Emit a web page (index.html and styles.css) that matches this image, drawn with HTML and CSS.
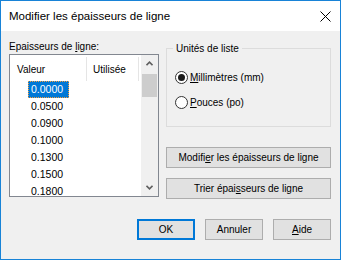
FILE: index.html
```html
<!DOCTYPE html>
<html lang="fr">
<head>
    <meta charset="UTF-8">
    <title>Modifier les épaisseurs de ligne</title>
    <link rel="stylesheet" href="styles.css">
</head>
<body>
    <div class="window">
        <div class="titlebar">
            <span class="title">Modifier les épaisseurs de ligne</span>
            <svg class="close" width="11" height="11" viewBox="0 0 11 11">
                <path d="M0.5 0.5 L10.5 10.5 M10.5 0.5 L0.5 10.5" stroke="#000" stroke-width="1" fill="none"/>
            </svg>
        </div>
        <div class="main">
            <div class="left">
                <div class="list-label">Epaisseurs de <u>l</u>igne:</div>
                <div class="listbox">
                    <div class="list-main">
                        <div class="list-head">
                            <span class="col col-val">Valeur</span>
                            <span class="col col-used">Utilisée</span>
                        </div>
                        <ul class="items">
                            <li><span class="val selected">0.0000</span></li>
                            <li><span class="val">0.0500</span></li>
                            <li><span class="val">0.0900</span></li>
                            <li><span class="val">0.1000</span></li>
                            <li><span class="val">0.1300</span></li>
                            <li><span class="val">0.1500</span></li>
                            <li><span class="val">0.1800</span></li>
                        </ul>
                    </div>
                    <div class="scrollbar">
                        <div class="arrow">
                            <svg width="7" height="5" viewBox="0 0 7 5"><polyline points="0.5,4.2 3.5,1.2 6.5,4.2" fill="none" stroke="#606060" stroke-width="1.6"/></svg>
                        </div>
                        <div class="thumb"></div>
                        <div class="track"></div>
                        <div class="arrow">
                            <svg width="7" height="5" viewBox="0 0 7 5"><polyline points="0.5,0.8 3.5,3.8 6.5,0.8" fill="none" stroke="#606060" stroke-width="1.6"/></svg>
                        </div>
                    </div>
                </div>
            </div>
            <div class="right">
                <fieldset class="units">
                    <legend>Unités de liste</legend>
                    <div class="radio-row">
                        <span class="radio"><span class="dot"></span></span>
                        <span><u>M</u>illimètres (mm)</span>
                    </div>
                    <div class="radio-row second">
                        <span class="radio"></span>
                        <span><u>P</u>ouces (po)</span>
                    </div>
                </fieldset>
                <button class="btn btn-wide first">Modifi<u>e</u>r les épaisseurs de ligne</button>
                <button class="btn btn-wide">Trier épai<u>s</u>seurs de ligne</button>
            </div>
        </div>
        <div class="footer">
            <button class="btn btn-small default">OK</button>
            <button class="btn btn-small">Annuler</button>
            <button class="btn btn-small"><u>A</u>ide</button>
        </div>
    </div>
</body>
</html>
```

FILE: styles.css
```css
body {
    margin: 0;
    font-family: "Liberation Sans", Arial, sans-serif;
    font-size: 10px;
    color: #000;
}
.window {
    width: 341px;
    height: 260px;
    box-sizing: border-box;
    border: 1px solid #1883d7;
    background: #f0f0f0;
    display: flex;
    flex-direction: column;
}
.titlebar {
    height: 30px;
    flex-shrink: 0;
    background: #fff;
    display: flex;
    align-items: center;
    justify-content: space-between;
    padding: 0 9px 0 8px;
}
.title {
    font-size: 11.5px;
}
.close {
    display: block;
}
.main {
    display: flex;
    gap: 7px;
    padding: 0 9px 0 8px;
}
.left {
    width: 150px;
}
.list-label {
    margin-top: 9px;
    margin-bottom: 1px;
    line-height: 13px;
}
.listbox {
    height: 143px;
    box-sizing: border-box;
    border: 1px solid #828790;
    background: #fff;
    display: flex;
    overflow: hidden;
}
.list-main {
    flex: 1;
    overflow: hidden;
}
.list-head {
    display: flex;
    height: 26px;
}
.col {
    margin-top: 2px;
    height: 24px;
    box-sizing: border-box;
    border-right: 1px solid #e5e5e5;
    display: flex;
    align-items: center;
}
.col-val {
    width: 77px;
    padding-left: 7px;
}
.col-used {
    width: 52px;
    padding-left: 6px;
}
.items {
    list-style: none;
    margin: 0;
    padding: 0;
    font-size: 10.5px;
}
.items li {
    height: 17px;
    padding-left: 18px;
}
.val {
    display: inline-block;
    width: 41px;
    height: 17px;
    line-height: 17px;
    padding-left: 3px;
    box-sizing: border-box;
}
.val.selected {
    background: #0078d7;
    color: #fff;
    outline: 1px dotted #f5a040;
    outline-offset: -1px;
}
.scrollbar {
    width: 17px;
    background: #f0f0f0;
    display: flex;
    flex-direction: column;
}
.arrow {
    height: 17px;
    flex-shrink: 0;
    display: flex;
    align-items: center;
    justify-content: center;
}
.arrow svg {
    display: block;
}
.thumb {
    margin: 2px 1px 0;
    height: 23px;
    background: #cdcdcd;
}
.track {
    flex: 1;
}
.right {
    width: 165px;
    padding-top: 11px;
    display: flex;
    flex-direction: column;
}
.units {
    margin: 0;
    padding: 16px 8px 17px;
    border: 1px solid #dcdcdc;
    min-width: 0;
}
.units legend {
    padding: 0 3px;
    margin-left: -2px;
    line-height: 13px;
}
.radio-row {
    display: flex;
    align-items: center;
    gap: 2px;
    height: 13px;
}
.radio-row.second {
    margin-top: 12px;
}
.radio {
    width: 13px;
    height: 13px;
    box-sizing: border-box;
    border: 1px solid #333;
    border-radius: 50%;
    background: #fff;
    display: flex;
    align-items: center;
    justify-content: center;
}
.dot {
    width: 7px;
    height: 7px;
    border-radius: 50%;
    background: #1a1a1a;
}
.btn {
    height: 21px;
    box-sizing: border-box;
    border: 1px solid #adadad;
    background: #e1e1e1;
    font: inherit;
    color: #000;
    padding: 0;
}
.btn-wide {
    width: 100%;
    margin-top: 10px;
}
.btn-wide.first {
    margin-top: 20px;
}
.footer {
    margin-top: auto;
    display: flex;
    justify-content: flex-end;
    gap: 10px;
    padding: 0 9px 19px 0;
}
.btn-small {
    width: 58px;
}
.btn.default {
    border: 2px solid #0078d7;
}
```
